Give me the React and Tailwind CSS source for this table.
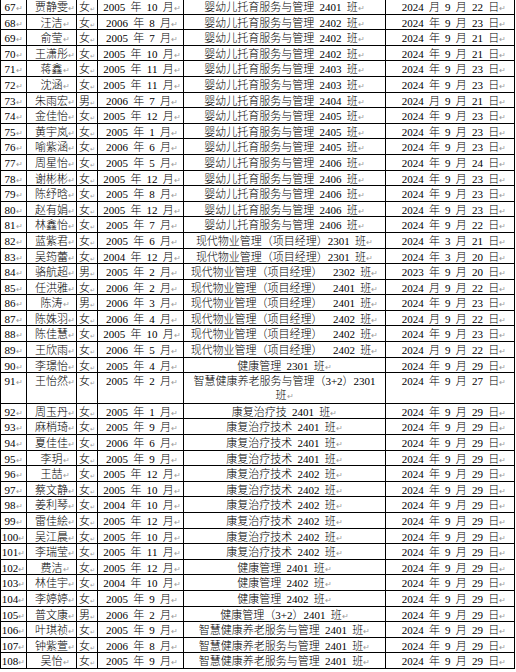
import React from 'react'

const kid = '婴幼儿托育服务与管理'
const wy = '现代物业管理（项目经理）'
const kf = '康复治疗技术'
const zh = '智慧健康养老服务与管理'

const rows = [
  ['67', '贾静雯', '女', '2005 年 10 月', `${kid} 2401 班`, '2024 月 9 月 22 日'],
  ['68', '汪洁', '女', '2006 年 8 月', `${kid} 2402 班`, '2024 年 9 月 23 日'],
  ['69', '俞莹', '女', '2005 年 7 月', `${kid} 2402 班`, '2024 年 9 月 21 日'],
  ['70', '王潇彤', '女', '2005 年 10 月', `${kid} 2402 班`, '2024 年 9 月 21 日'],
  ['71', '蒋鑫', '女', '2005 年 11 月', `${kid} 2403 班`, '2024 年 9 月 23 日'],
  ['72', '沈涵', '女', '2005 年 11 月', `${kid} 2403 班`, '2024 年 9 月 23 日'],
  ['73', '朱雨宏', '男', '2006 年 7 月', `${kid} 2404 班`, '2024 月 9 月 21 日'],
  ['74', '金佳怡', '女', '2005 年 12 月', `${kid} 2405 班`, '2024 年 9 月 23 日'],
  ['75', '黄宇岚', '女', '2005 年 1 月', `${kid} 2405 班`, '2024 年 9 月 23 日'],
  ['76', '喻紫涵', '女', '2006 年 6 月', `${kid} 2405 班`, '2024 年 9 月 23 日'],
  ['77', '周星怡', '女', '2005 年 5 月', `${kid} 2406 班`, '2024 年 9 月 24 日'],
  ['78', '谢彬彬', '女', '2005 年 12 月', `${kid} 2406 班`, '2024 年 9 月 23 日'],
  ['79', '陈纾晗', '女', '2005 年 8 月', `${kid} 2406 班`, '2024 年 9 月 23 日'],
  ['80', '赵有娟', '女', '2005 年 12 月', `${kid} 2406 班`, '2024 年 9 月 23 日'],
  ['81', '林鑫怡', '女', '2005 年 7 月', `${kid} 2406 班`, '2024 年 9 月 22 日'],
  ['82', '蓝紫君', '女', '2005 年 6 月', `${wy}2301 班`, '2024 年 3 月 21 日'],
  ['83', '吴筠蕾', '女', '2004 年 12 月', `${wy}2301 班`, '2024 年 3 月 20 日'],
  ['84', '骆航超', '男', '2005 年 2 月', `${wy}  2302 班`, '2023 年 9 月 20 日'],
  ['85', '任洪雅', '女', '2006 年 2 月', `${wy}  2401 班`, '2024 月 9 月 22 日'],
  ['86', '陈涛', '男', '2006 年 3 月', `${wy}  2401 班`, '2024 年 9 月 23 日'],
  ['87', '陈姝羽', '女', '2006 年 4 月', `${wy}  2402 班`, '2024 月 9 月 22 日'],
  ['88', '陈佳慧', '女', '2005 年 10 月', `${wy}  2402 班`, '2024 年 9 月 23 日'],
  ['89', '王欣雨', '女', '2006 年 5 月', `${wy}  2402 班`, '2024 月 9 月 22 日'],
  ['90', '李璟怡', '女', '2005 年 4 月', '健康管理 2301 班', '2024 年 9 月 29 日'],
  ['91', '王怡然', '女', '2005 年 2 月', `${zh}（3+2）2301\n班`, '2024 年 9 月 27 日'],
  ['92', '周玉丹', '女', '2005 年 1 月', '康复治疗技 2401 班', '2024 年 9 月 29 日'],
  ['93', '麻梢琦', '女', '2005 年 9 月', `${kf} 2401 班`, '2024 年 9 月 29 日'],
  ['94', '夏佳佳', '女', '2006 年 6 月', `${kf} 2401 班`, '2024 年 9 月 29 日'],
  ['95', '李玥', '女', '2005 年 9 月', `${kf} 2401 班`, '2024 年 9 月 29 日'],
  ['96', '王喆', '女', '2005 年 12 月', `${kf} 2402 班`, '2024 年 9 月 29 日'],
  ['97', '蔡文静', '女', '2005 年 10 月', `${kf} 2402 班`, '2024 年 9 月 29 日'],
  ['98', '姜利琴', '女', '2004 年 10 月', `${kf} 2402 班`, '2024 年 9 月 29 日'],
  ['99', '雷佳絵', '女', '2005 年 12 月', `${kf} 2402 班`, '2024 年 9 月 29 日'],
  ['100', '吴江晨', '女', '2005 年 10 月', `${kf} 2402 班`, '2024 年 9 月 29 日'],
  ['101', '李瑞莹', '女', '2005 年 11 月', `${kf} 2402 班`, '2024 年 9 月 29 日'],
  ['102', '费洁', '女', '2005 年 12 月', '健康管理 2401 班', '2024 年 9 月 29 日'],
  ['103', '林佳宇', '女', '2004 年 10 月', '健康管理 2402 班', '2024 年 9 月 29 日'],
  ['104', '李婷婷', '女', '2005 年 9 月', '健康管理 2402 班', '2024 年 9 月 29 日'],
  ['105', '普文康', '男', '2006 年 2 月', '健康管理（3+2）2401 班', '2024 年 9 月 29 日'],
  ['106', '叶琪祯', '女', '2005 年 9 月', `${zh} 2401 班`, '2024 年 9 月 29 日'],
  ['107', '钟紫萱', '女', '2006 年 8 月', `${zh} 2401 班`, '2024 年 9 月 29 日'],
  ['108', '吴怡', '女', '2005 年 9 月', `${zh} 2401 班`, '2024 年 9 月 29 日'],
]

// Word's paragraph mark
const Mark = ({ small }) => (
  <span
    className={`leading-none text-[#9a9a9a] [font-family:'DejaVu_Sans',sans-serif] ${
      small ? 'text-[6px]' : 'text-[8px]'
    }`}
  >
    ↵
  </span>
)

const Cell = ({ tall, children, className = '' }) => (
  <td className="border border-black p-0 align-top">
    <div
      className={`overflow-visible text-center whitespace-pre pt-[1px] ${
        tall ? 'h-[29.6px]' : 'h-[14.6px]'
      } ${className}`}
    >
      {children}
    </div>
  </td>
)

export default function App() {
  return (
    <div className="w-[516px] h-[672px] overflow-hidden bg-white">
      <table className="-mt-[2px] w-[514px] table-fixed border-collapse text-[11px] font-light leading-[14px] text-black [word-spacing:2.5px] [font-family:'Liberation_Serif','Noto_Sans_CJK_SC',serif]">
        <colgroup>
          <col className="w-[26px]" />
          <col className="w-[50px]" />
          <col className="w-[21px]" />
          <col className="w-[86px]" />
          <col className="w-[202px]" />
          <col className="w-[129px]" />
        </colgroup>
        <tbody>
          {rows.map(([no, name, sex, born, cls, date]) => {
            const tall = cls.includes('\n')
            return (
              <tr key={no}>
                <Cell tall={tall}>
                  {no}
                  <Mark />
                </Cell>
                <Cell tall={tall} className="pl-[7px]">
                  {name}
                  <Mark />
                </Cell>
                <Cell tall={tall}>
                  {sex}
                  <Mark small />
                </Cell>
                <Cell tall={tall} className="pl-[3px]">
                  {born}
                  <Mark />
                </Cell>
                <Cell tall={tall}>
                  {cls}
                  <Mark />
                </Cell>
                <Cell tall={tall} className="pl-[8px]">
                  {date}
                  <Mark />
                </Cell>
              </tr>
            )
          })}
        </tbody>
      </table>
    </div>
  )
}
